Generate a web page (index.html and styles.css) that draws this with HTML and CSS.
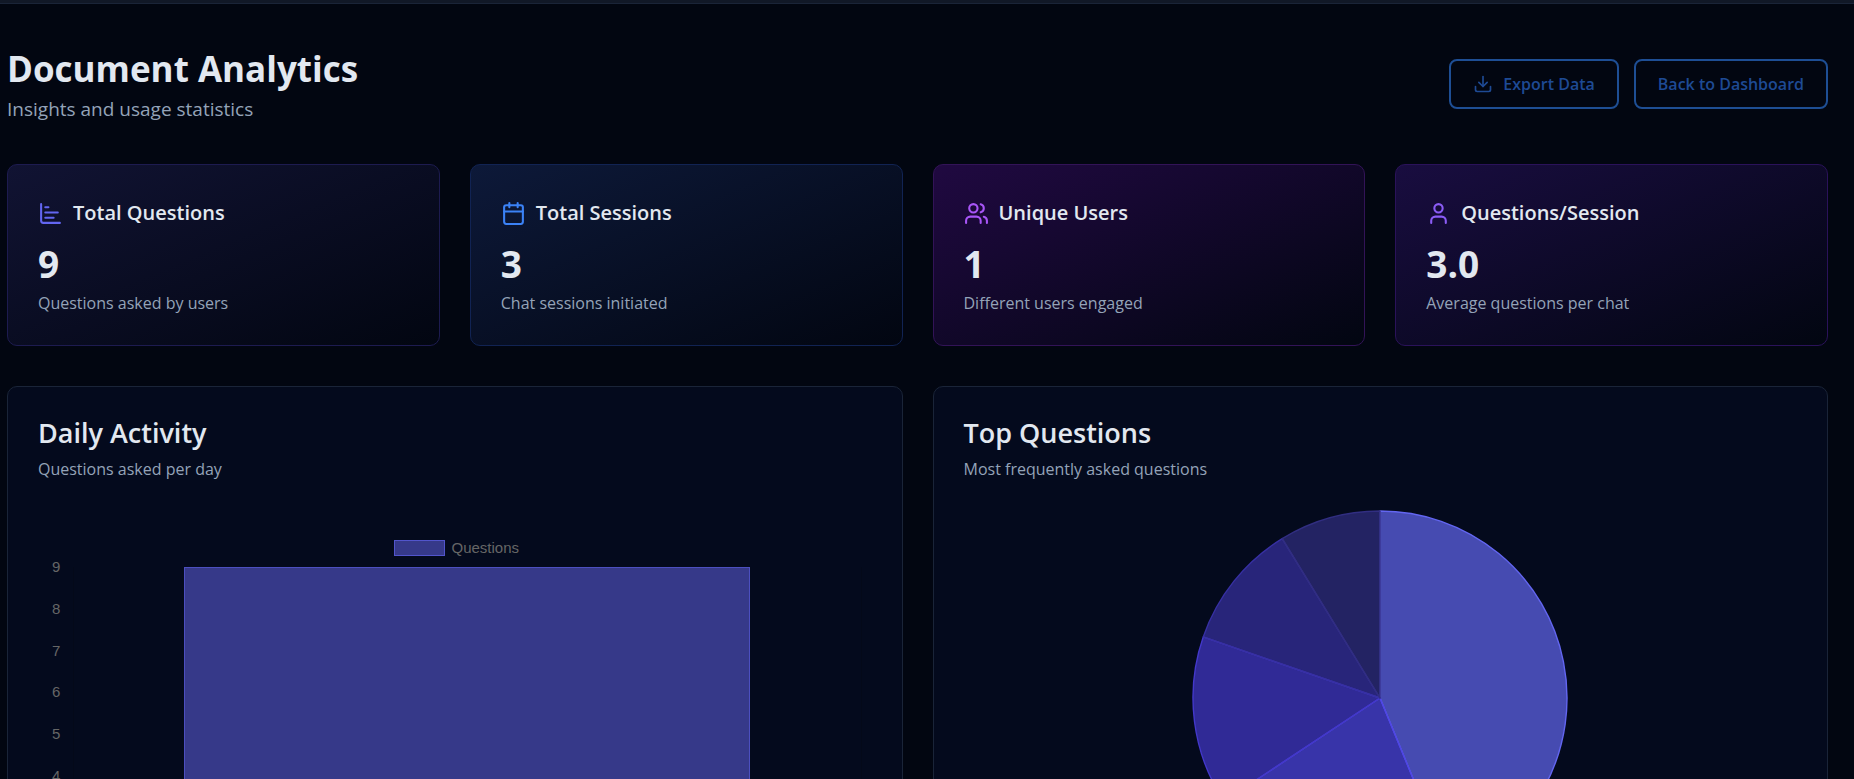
FILE: index.html
```html
<!doctype html>
<html lang="en">
<head>
<meta charset="utf-8">
<meta name="viewport" content="width=device-width, initial-scale=1">
<title>Document Analytics</title>
<link rel="stylesheet" href="styles.css">
</head>

<body>
<div class="topbar"></div>
<main class="page">

  <header class="page-header">
    <div>
      <h1>Document Analytics</h1>
      <p class="subtitle">Insights and usage statistics</p>
    </div>
    <div class="actions">
      <button type="button" class="btn">
        <svg class="btn-icon" viewBox="0 0 24 24"><path d="M21 15v4a2 2 0 0 1-2 2H5a2 2 0 0 1-2-2v-4"/><path d="M7 10l5 5 5-5"/><path d="M12 15V3"/></svg>
        Export Data
      </button>
      <a href="#" class="btn">Back to Dashboard</a>
    </div>
  </header>

  <section class="stats">
    <div class="card indigo">
      <h2>
        <svg class="icon" viewBox="0 0 24 24"><path d="M3 3v16a2 2 0 0 0 2 2h16"/><path d="M7 16h8"/><path d="M7 11h12"/><path d="M7 6h3"/></svg>
        Total Questions
      </h2>
      <div class="value">9</div>
      <p>Questions asked by users</p>
    </div>
    <div class="card blue">
      <h2>
        <svg class="icon" viewBox="0 0 24 24"><path d="M8 2v4"/><path d="M16 2v4"/><rect width="18" height="18" x="3" y="4" rx="2"/><path d="M3 10h18"/></svg>
        Total Sessions
      </h2>
      <div class="value">3</div>
      <p>Chat sessions initiated</p>
    </div>
    <div class="card purple">
      <h2>
        <svg class="icon" viewBox="0 0 24 24"><path d="M16 21v-2a4 4 0 0 0-4-4H6a4 4 0 0 0-4 4v2"/><circle cx="9" cy="7" r="4"/><path d="M22 21v-2a4 4 0 0 0-3-3.87"/><path d="M16 3.13a4 4 0 0 1 0 7.75"/></svg>
        Unique Users
      </h2>
      <div class="value">1</div>
      <p>Different users engaged</p>
    </div>
    <div class="card violet">
      <h2>
        <svg class="icon" viewBox="0 0 24 24"><path d="M19 21v-2a4 4 0 0 0-4-4H9a4 4 0 0 0-4 4v2"/><circle cx="12" cy="7" r="4"/></svg>
        Questions/Session
      </h2>
      <div class="value">3.0</div>
      <p>Average questions per chat</p>
    </div>
  </section>

  <section class="charts">
    <div class="panel">
      <h2>Daily Activity</h2>
      <p>Questions asked per day</p>
      <div class="bar-chart">
        <div class="legend"><span class="swatch"></span>Questions</div>
        <div class="plot">
          <div class="ticks">
            <span>9</span><span>8</span><span>7</span><span>6</span><span>5</span><span>4</span><span>3</span><span>2</span><span>1</span><span>0</span>
          </div>
          <div class="grid">
            <div class="bar" style="height: 100%"></div>
          </div>
        </div>
      </div>
    </div>
    <div class="panel">
      <h2>Top Questions</h2>
      <p>Most frequently asked questions</p>
      <svg class="pie" id="pie" viewBox="-188 -188 376 376"></svg>
    </div>
  </section>

</main>
<script>
const slices = [
  [60, '#6366f1'],
  [30, '#4f46e5'],
  [20, '#4338ca'],
  [15, '#3730a3'],
  [12, '#312e81']
];
const r = 187;
const total = slices.reduce((sum, s) => sum + s[0], 0);
const pie = document.getElementById('pie');

function point(part) {
  const a = part / total * 2 * Math.PI;
  return (r * Math.sin(a)).toFixed(2) + ' ' + (-r * Math.cos(a)).toFixed(2);
}

let done = 0;
for (const [count, color] of slices) {
  const path = document.createElementNS('http://www.w3.org/2000/svg', 'path');
  const large = count > total / 2 ? 1 : 0;
  path.setAttribute('d', `M0 0L${point(done)}A${r} ${r} 0 ${large} 1 ${point(done + count)}Z`);
  path.setAttribute('fill', color);
  path.setAttribute('stroke', color);
  path.setAttribute('stroke-width', 1.4);
  pie.appendChild(path);
  done += count;
}
</script>
</body>
</html>
```

FILE: styles.css
```css
* {
  box-sizing: border-box;
}

body {
  margin: 0;
  background: #020611;
  color: #e2e8f0;
  font-family: "Segoe UI", "Open Sans", "Noto Sans", sans-serif;
}

h1, h2, p {
  margin: 0;
}

.topbar {
  height: 4px;
  background: #111827;
  border-bottom: 1px solid #1a2438;
}

.page {
  padding: 40px 26px 40px 7px;
}

.page-header {
  display: flex;
  justify-content: space-between;
  align-items: center;
  margin-bottom: 40px;
}

h1 {
  font-size: 35px;
  line-height: 50px;
  font-weight: 700;
}

.subtitle {
  font-size: 19px;
  line-height: 30px;
  color: #94a3b8;
}

.actions {
  display: flex;
  gap: 15px;
}

.btn {
  display: flex;
  align-items: center;
  gap: 10px;
  height: 50px;
  padding: 0 22px;
  border: 2px solid #1e4e94;
  border-radius: 8px;
  background: transparent;
  color: #1e4a94;
  font-family: inherit;
  font-size: 16px;
  font-weight: 600;
  text-decoration: none;
  cursor: pointer;
}

.btn-icon {
  width: 20px;
  height: 20px;
}

svg {
  fill: none;
  stroke: currentColor;
  stroke-linecap: round;
  stroke-linejoin: round;
}

.icon, .btn-icon {
  stroke-width: 2;
}

.stats {
  display: grid;
  grid-template-columns: repeat(4, 1fr);
  gap: 30px;
  margin-bottom: 40px;
}

.card {
  padding: 30px 30px 28px;
  border: 1px solid;
  border-radius: 10px;
}

.card h2 {
  display: flex;
  align-items: center;
  gap: 10px;
  margin-bottom: 10px;
  font-size: 20px;
  line-height: 36px;
  font-weight: 600;
}

.icon {
  width: 25px;
  height: 25px;
}

.value {
  margin-bottom: 2px;
  font-size: 37px;
  line-height: 46px;
  font-weight: 700;
}

.card p, .panel p {
  font-size: 16px;
  line-height: 28px;
  color: #94a3b8;
}

.indigo {
  background: linear-gradient(to bottom right, #111333, #020611);
  border-color: #1d1b50;
}
.blue {
  background: linear-gradient(to bottom right, #0d1939, #020611);
  border-color: #112353;
}
.purple {
  background: linear-gradient(to bottom right, #200941, #020611);
  border-color: #321357;
}
.violet {
  background: linear-gradient(to bottom right, #190d40, #020611);
  border-color: #2a125a;
}

.indigo .icon { color: #6366f1; }
.blue .icon { color: #3b82f6; }
.purple .icon { color: #a855f7; }
.violet .icon { color: #8b5cf6; }

.charts {
  display: grid;
  grid-template-columns: repeat(2, 1fr);
  gap: 30px;
}

.panel {
  padding: 30px;
  border: 1px solid #1a2438;
  border-radius: 10px;
  background: #040a1d;
}

.panel h2 {
  margin-bottom: 6px;
  font-size: 27px;
  line-height: 32px;
  font-weight: 600;
}

/* bar chart */
.bar-chart {
  padding: 57px 10px 0 14px;
  font-family: Arial, "Liberation Sans", sans-serif;
  font-size: 15px;
  line-height: 16px;
  color: #666;
}

.legend {
  display: flex;
  justify-content: center;
  gap: 6px;
  margin-bottom: 11px;
}

.swatch {
  width: 51px;
  height: 16px;
  background: #363989;
  border: 1px solid #5255cc;
}

.plot {
  display: flex;
  gap: 13px;
  height: 376px;
}

.ticks {
  display: flex;
  flex-direction: column;
  justify-content: space-between;
  margin: -8px 0;
}

.grid {
  flex: 1;
  display: flex;
  justify-content: center;
  align-items: flex-end;
  border: 1px solid #040919;
  border-top: 0;
}

.bar {
  width: 72%;
  background: #363989;
  border: 1px solid #4c4fc0;
  border-bottom: 0;
}

/* pie chart */
.pie {
  display: block;
  width: 376px;
  margin: 27px auto 0;
}

.pie path {
  fill-opacity: 0.7;
}
```
